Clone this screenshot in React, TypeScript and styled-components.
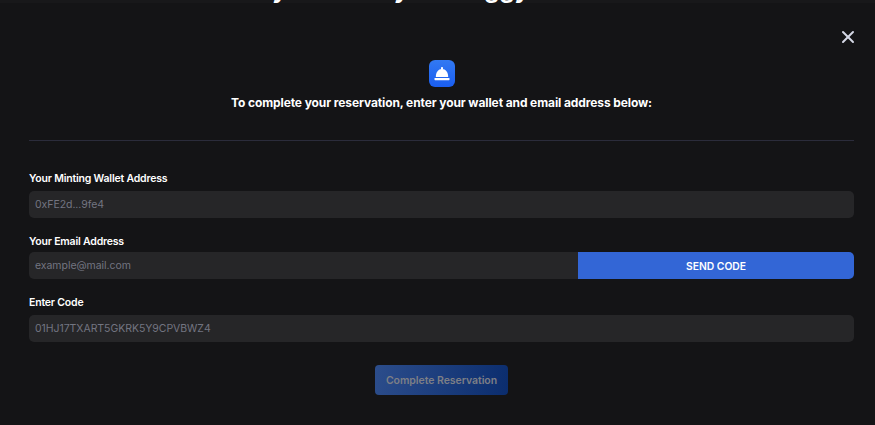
import React from "react";
import styled, { createGlobalStyle } from "styled-components";
import { X } from "lucide-react";

const Global = createGlobalStyle`
  html, body { margin: 0; padding: 0; width: 875px; height: 425px; overflow: hidden; background: #141416; }
  * { box-sizing: border-box; }
`;

const Page = styled.div`
  width: 875px;
  height: 425px;
  overflow: hidden;
  background: #141416;
  font-family: Inter, "Liberation Sans", sans-serif;
  color: #fff;
`;

const Clipped = styled.div`
  height: 3px;
  overflow: hidden;
  display: flex;
  justify-content: center;
  background: #18181a;
`;

const ClippedTitle = styled.div`
  margin-top: -25px;
  padding-left: 14px;
  font-size: 24px;
  line-height: 29px;
  font-weight: 700;
  white-space: nowrap;
`;

const Close = styled.div`
  display: flex;
  justify-content: flex-end;
  padding: 24px 17px 0 0;
  height: 57px;
  color: #d5d8e6;
`;

const Head = styled.div`
  display: flex;
  flex-direction: column;
  align-items: center;
  gap: 8px;
  height: 80px;
  padding-left: 8px;
`;

const Heading = styled.div`
  font-size: 12px;
  line-height: 15px;
  font-weight: 700;
  letter-spacing: -0.1px;
`;

const Rule = styled.div`
  margin: 0 21px 0 29px;
  height: 1px;
  background: #2b2c3b;
`;

const Form = styled.div`
  margin: 30px 21px 0 29px;
  display: flex;
  flex-direction: column;
  gap: 16px;
`;

const Field = styled.div<{ $gap: number }>`
  display: flex;
  flex-direction: column;
  gap: ${(p) => p.$gap}px;
`;

const Label = styled.div`
  font-size: 10.5px;
  line-height: 13px;
  font-weight: 600;
  letter-spacing: -0.19px;
  padding-top: 1px;
  margin-bottom: -1px;
`;

const Input = styled.div<{ $joined?: boolean }>`
  flex: ${(p) => (p.$joined ? "1" : "none")};
  height: 27px;
  padding: 0 6px;
  display: flex;
  align-items: center;
  background: #262628;
  border-radius: ${(p) => (p.$joined ? "5px 0 0 5px" : "5px")};
  color: #737581;
  font-size: 10.5px;
  letter-spacing: -0.05px;
`;

const Row = styled.div`
  display: flex;
`;

const SendButton = styled.div`
  width: 276px;
  height: 27px;
  display: flex;
  align-items: center;
  justify-content: center;
  background: #3366d6;
  border-radius: 0 5px 5px 0;
  font-size: 10.3px;
  font-weight: 600;
`;

const Actions = styled.div`
  display: flex;
  justify-content: center;
  margin-top: 23px;
  padding-left: 8px;
`;

const Complete = styled.div`
  width: 133px;
  height: 30px;
  display: flex;
  align-items: center;
  justify-content: center;
  border-radius: 4px;
  background: linear-gradient(100deg, #2c4d8b, #0b2d6e);
  color: #7d7f86;
  font-size: 10.5px;
  font-weight: 600;
  letter-spacing: -0.05px;
`;

const Footer = styled.div`
  margin-top: 28px;
  padding-left: 31px;
  line-height: 0;
`;

const Bell = () => (
  <svg width="26" height="27" viewBox="0 0 26 27">
    <defs>
      <linearGradient id="bell" x1="0" y1="0" x2="0" y2="1">
        <stop offset="0" stopColor="#3279f2" />
        <stop offset="1" stopColor="#1a5ef0" />
      </linearGradient>
    </defs>
    <rect width="26" height="27" rx="6" fill="url(#bell)" />
    <rect x="12" y="7" width="2" height="2.5" rx="0.8" fill="#fff" />
    <path d="M6.8 17C6.8 12 9.4 9 13 9s6.2 3 6.2 8z" fill="#fff" />
    <rect x="5.5" y="18" width="15" height="2.2" rx="0.6" fill="#fff" />
  </svg>
);

const Peak = () => (
  <svg width="5" height="3" viewBox="0 0 5 3">
    <path d="M0 3 2.5 0 5 3z" fill="#9a9a9a" />
  </svg>
);

export default function App() {
  return (
    <Page>
      <Global />
      <Clipped>
        <ClippedTitle>Early in the Day for Buggy Bears Club</ClippedTitle>
      </Clipped>
      <Close>
        <X size={20} strokeWidth={2.4} />
      </Close>
      <Head>
        <Bell />
        <Heading>To complete your reservation, enter your wallet and email address below:</Heading>
      </Head>
      <Rule />
      <Form>
        <Field $gap={6.5}>
          <Label>Your Minting Wallet Address</Label>
          <Input>0xFE2d...9fe4</Input>
        </Field>
        <Field $gap={5.5}>
          <Label>Your Email Address</Label>
          <Row>
            <Input $joined>example@mail.com</Input>
            <SendButton>SEND CODE</SendButton>
          </Row>
        </Field>
        <Field $gap={7}>
          <Label>Enter Code</Label>
          <Input>01HJ17TXART5GKRK5Y9CPVBWZ4</Input>
        </Field>
      </Form>
      <Actions>
        <Complete>Complete Reservation</Complete>
      </Actions>
      <Footer>
        <Peak />
      </Footer>
    </Page>
  );
}
